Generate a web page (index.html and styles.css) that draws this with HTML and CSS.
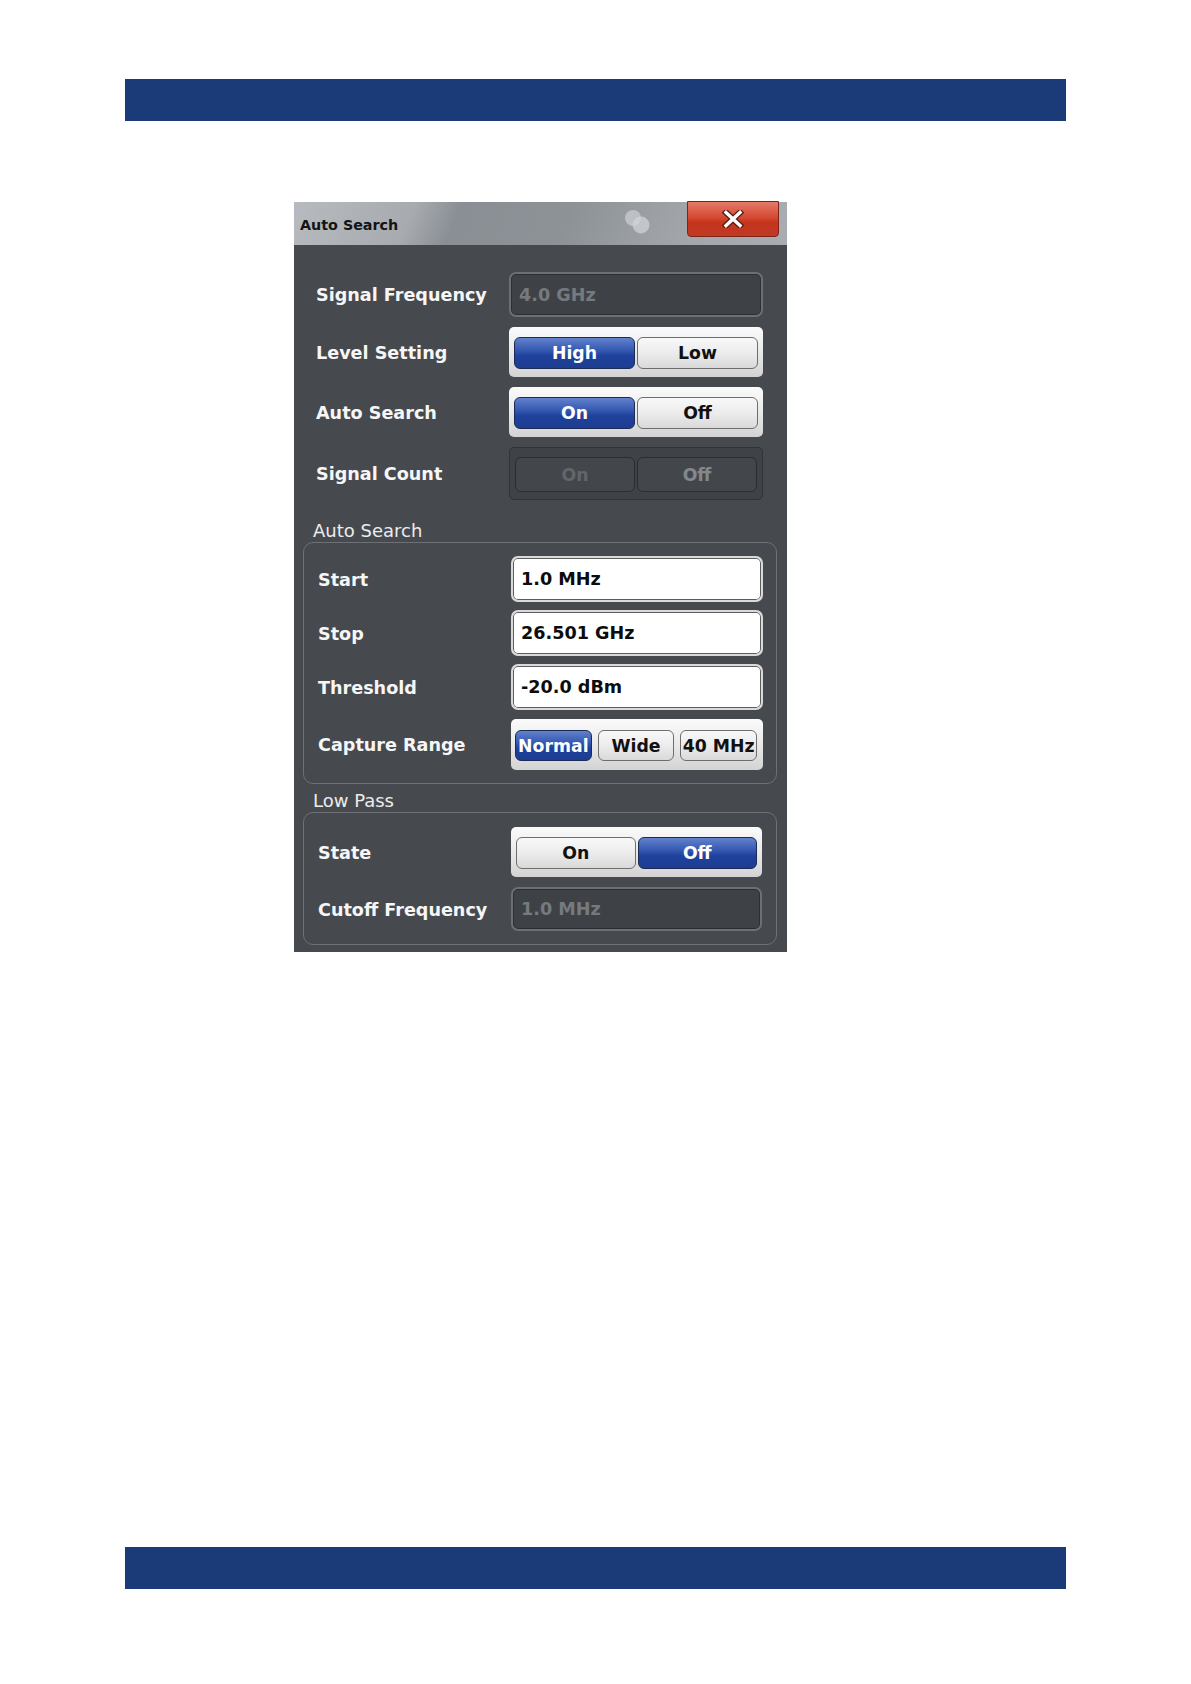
FILE: index.html
```html
<!DOCTYPE html>
<html lang="en">
<head>
    <meta charset="UTF-8">
    <title>Auto Search</title>
    <link rel="stylesheet" href="styles.css">
</head>
<body>
    <div class="band top-band"></div>

    <div class="dialog">
        <div class="titlebar">
            <span class="title">Auto Search</span>
            <svg class="dots" width="30" height="26" viewBox="0 0 30 26">
                <circle cx="10" cy="9" r="8" fill="#c9ccd0" fill-opacity="0.75"/>
                <circle cx="18" cy="16" r="8.5" fill="#d3d6d9" fill-opacity="0.7"/>
            </svg>
            <div class="close">
                <svg width="22" height="18" viewBox="0 0 22 18">
                    <path d="M4 2.5 L18 15.5 M18 2.5 L4 15.5" stroke="#5a1c14" stroke-width="6" stroke-linecap="square"/>
                    <path d="M4 2.5 L18 15.5 M18 2.5 L4 15.5" stroke="#ffffff" stroke-width="3.4" stroke-linecap="square"/>
                </svg>
            </div>
        </div>

        <div class="content">
            <div class="rows top-rows">
                <div class="row h45">
                    <div class="label">Signal Frequency</div>
                    <div class="field disabled">4.0 GHz</div>
                </div>
                <div class="row h50">
                    <div class="label">Level Setting</div>
                    <div class="toggle">
                        <div class="btn active">High</div>
                        <div class="btn">Low</div>
                    </div>
                </div>
                <div class="row h50">
                    <div class="label">Auto Search</div>
                    <div class="toggle">
                        <div class="btn active">On</div>
                        <div class="btn">Off</div>
                    </div>
                </div>
                <div class="row h53">
                    <div class="label">Signal Count</div>
                    <div class="toggle disabled">
                        <div class="btn dim">On</div>
                        <div class="btn">Off</div>
                    </div>
                </div>
            </div>

            <div class="section-title first">Auto Search</div>
            <div class="group">
                <div class="rows tight">
                    <div class="row h46">
                        <div class="label">Start</div>
                        <div class="field">1.0 MHz</div>
                    </div>
                    <div class="row h46">
                        <div class="label">Stop</div>
                        <div class="field">26.501 GHz</div>
                    </div>
                    <div class="row h46">
                        <div class="label">Threshold</div>
                        <div class="field">-20.0 dBm</div>
                    </div>
                    <div class="row h51 capture">
                        <div class="label">Capture Range</div>
                        <div class="toggle three">
                            <div class="btn active">Normal</div>
                            <div class="btn">Wide</div>
                            <div class="btn">40 MHz</div>
                        </div>
                    </div>
                </div>
            </div>

            <div class="section-title">Low Pass</div>
            <div class="group second">
                <div class="rows">
                    <div class="row h50">
                        <div class="label">State</div>
                        <div class="toggle">
                            <div class="btn">On</div>
                            <div class="btn active">Off</div>
                        </div>
                    </div>
                    <div class="row h44">
                        <div class="label">Cutoff Frequency</div>
                        <div class="field disabled">1.0 MHz</div>
                    </div>
                </div>
            </div>
        </div>
    </div>

    <div class="band bottom-band"></div>
</body>
</html>
```

FILE: styles.css
```css
body {
    margin: 0;
    background: #ffffff;
    font-family: "DejaVu Sans", Verdana, sans-serif;
}
.band {
    width: 941px;
    height: 42px;
    margin-left: 125px;
    background-color: #1b3a78;
}
.top-band {
    margin-top: 79px;
}
.bottom-band {
    margin-top: 595px;
}

/* dialog */
.dialog {
    width: 493px;
    margin: 81px 0 0 294px;
    background-color: #464a4f;
}
.titlebar {
    position: relative;
    height: 43px;
    background: linear-gradient(112deg, #b7bbbf 0%, #a7abb0 24%, #8a8f95 33%, #8d9297 55%, #a3a7ab 80%, #a9adb1 100%);
}
.title {
    display: inline-block;
    padding: 15px 0 0 6px;
    font-size: 14.3px;
    font-weight: bold;
    color: #141414;
}
.dots {
    position: absolute;
    left: 329px;
    top: 7px;
}
.close {
    position: absolute;
    top: -1px;
    right: 8px;
    width: 90px;
    height: 34px;
    border: 1px solid #7d2417;
    border-radius: 0 0 4px 4px;
    background: linear-gradient(#e47a68, #d54a33 45%, #c5341d 60%, #c03a25);
    display: flex;
    align-items: center;
    justify-content: center;
}

.content {
    padding: 27px 10px 7px 9px;
}
.rows {
    display: flex;
    flex-direction: column;
    gap: 10px;
}
.top-rows {
    padding: 0 14px 0 13px;
}
.rows.tight {
    gap: 8px;
}
.row {
    display: flex;
    align-items: stretch;
}
.h44 { height: 44px; }
.h45 { height: 45px; }
.h46 { height: 46px; }
.h50 { height: 50px; }
.h51 { height: 51px; }
.h53 { height: 53px; }
.capture {
    margin-top: 1px;
}
.label {
    width: 193px;
    flex: none;
    display: flex;
    align-items: center;
    padding-top: 1px;
    box-sizing: border-box;
    font-size: 17.6px;
    font-weight: bold;
    color: #f6f6f6;
}

/* input fields */
.field {
    flex: 1;
    display: flex;
    align-items: center;
    padding-left: 8px;
    border: 2px solid #dadada;
    border-radius: 7px;
    background: #ffffff;
    box-shadow: inset 0 0 0 1px #5c5c5c;
    font-size: 17.6px;
    font-weight: bold;
    color: #0c0c0c;
}
.field.disabled {
    border-color: #6c7075;
    background: #3e4247;
    box-shadow: inset 0 0 0 1px #2c2f33;
    color: #767a7f;
}

/* toggle buttons */
.toggle {
    flex: 1;
    display: flex;
    gap: 2px;
    padding: 10px 5px 8px;
    border-radius: 5px;
    background: linear-gradient(#fbfbfb, #e9e9e9 50%, #d3d3d3);
}
.toggle.three {
    gap: 6px;
    padding: 11px 6px 9px 4px;
}
.btn {
    flex: 1;
    display: flex;
    align-items: center;
    justify-content: center;
    overflow: hidden;
    white-space: nowrap;
    border: 1px solid #6e6e6e;
    border-radius: 6px;
    background: linear-gradient(#f8f8f8, #ececec 50%, #d9d9d9);
    font-size: 17.3px;
    font-weight: bold;
    color: #111111;
}
.btn.active {
    border-color: #1c2b55;
    background: linear-gradient(#6282cc, #3659b2 40%, #1f419c 60%, #1d3d92);
    color: #ffffff;
}
.toggle.disabled {
    padding: 9px 5px 7px;
    border: 1px solid #303337;
    background: #3f4348;
}
.toggle.disabled .btn {
    border-color: #2a2d31;
    background: #43474c;
    color: #84888c;
}
.toggle.disabled .btn.dim {
    color: #62666b;
}

/* framed sections */
.section-title {
    margin: 6px 0 0 10px;
    line-height: 22px;
    font-size: 18px;
    color: #ececec;
}
.section-title.first {
    margin-top: 20px;
}
.group {
    border: 1px solid #6d7176;
    border-radius: 10px;
    padding: 13px 13px 13px 14px;
}
.group.second {
    padding: 14px 14px 13px 14px;
}
```
